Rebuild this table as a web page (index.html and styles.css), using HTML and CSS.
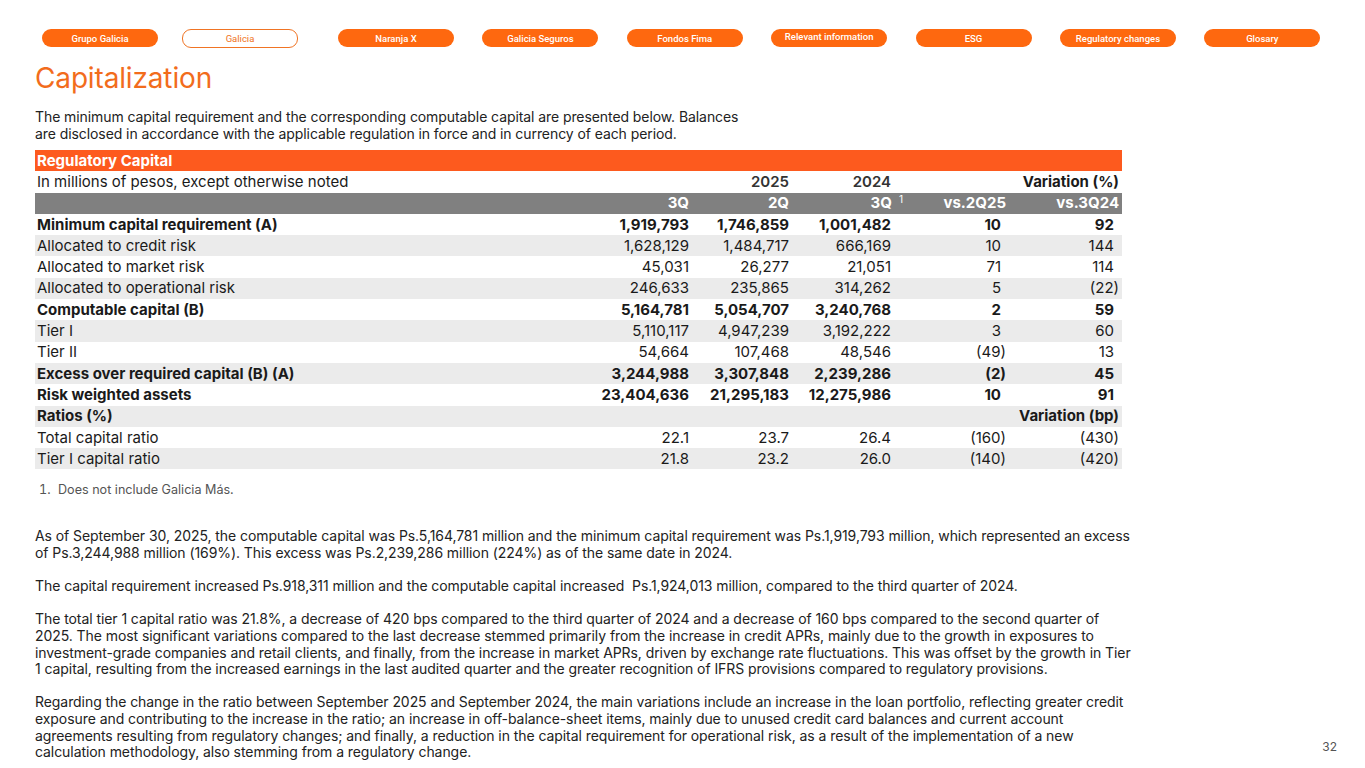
FILE: index.html
```html
<!DOCTYPE html>
<html lang="en">
<head>
<meta charset="utf-8">
<title>Capitalization</title>
<link rel="stylesheet" href="styles.css">
</head>
<body>
<div class="page">
  <nav class="nav">
    <span class="pill">Grupo Galicia</span>
    <span class="pill pill-outline">Galicia</span>
    <span class="pill">Naranja X</span>
    <span class="pill">Galicia Seguros</span>
    <span class="pill">Fondos Fima</span>
    <span class="pill pill-raised">Relevant information</span>
    <span class="pill">ESG</span>
    <span class="pill">Regulatory changes</span>
    <span class="pill">Glosary</span>
  </nav>

  <h1 class="title">Capitalization</h1>

  <p class="intro">The minimum capital requirement and the corresponding computable capital are presented below. Balances<br>are disclosed in accordance with the applicable regulation in force and in currency of each period.</p>

  <table class="cap">
    <colgroup>
      <col class="c-label"><col class="c-1"><col class="c-2"><col class="c-3"><col class="c-4"><col class="c-5">
    </colgroup>
    <tr class="r-title"><td colspan="6">Regulatory Capital</td></tr>
    <tr class="r-units">
      <td>In millions of pesos, except otherwise noted</td>
      <td></td><td class="n semi">2025</td><td class="n semi">2024</td><td></td><td class="n b">Variation (%)</td>
    </tr>
    <tr class="r-head">
      <td></td><td class="n">3Q</td><td class="n">2Q</td><td class="n">3Q<span class="sup">1</span></td><td class="n">vs.2Q25</td><td class="n">vs.3Q24</td>
    </tr>
    <tr class="b"><td>Minimum capital requirement (A)</td><td class="n">1,919,793</td><td class="n">1,746,859</td><td class="n">1,001,482</td><td class="n pr">10</td><td class="n pr">92</td></tr>
    <tr class="g"><td>Allocated to credit risk</td><td class="n">1,628,129</td><td class="n">1,484,717</td><td class="n">666,169</td><td class="n pr">10</td><td class="n pr">144</td></tr>
    <tr><td>Allocated to market risk</td><td class="n">45,031</td><td class="n">26,277</td><td class="n">21,051</td><td class="n pr">71</td><td class="n pr">114</td></tr>
    <tr class="g"><td>Allocated to operational risk</td><td class="n">246,633</td><td class="n">235,865</td><td class="n">314,262</td><td class="n pr">5</td><td class="n">(22)</td></tr>
    <tr class="b"><td>Computable capital (B)</td><td class="n">5,164,781</td><td class="n">5,054,707</td><td class="n">3,240,768</td><td class="n pr">2</td><td class="n pr">59</td></tr>
    <tr class="g"><td>Tier I</td><td class="n">5,110,117</td><td class="n">4,947,239</td><td class="n">3,192,222</td><td class="n pr">3</td><td class="n pr">60</td></tr>
    <tr><td>Tier II</td><td class="n">54,664</td><td class="n">107,468</td><td class="n">48,546</td><td class="n">(49)</td><td class="n pr">13</td></tr>
    <tr class="g b"><td>Excess over required capital (B) (A)</td><td class="n">3,244,988</td><td class="n">3,307,848</td><td class="n">2,239,286</td><td class="n">(2)</td><td class="n pr">45</td></tr>
    <tr class="b"><td>Risk weighted assets</td><td class="n">23,404,636</td><td class="n">21,295,183</td><td class="n">12,275,986</td><td class="n pr">10</td><td class="n pr">91</td></tr>
    <tr class="g b"><td>Ratios (%)</td><td></td><td></td><td></td><td></td><td class="n">Variation (bp)</td></tr>
    <tr><td>Total capital ratio</td><td class="n">22.1</td><td class="n">23.7</td><td class="n">26.4</td><td class="n">(160)</td><td class="n">(430)</td></tr>
    <tr class="g"><td>Tier I capital ratio</td><td class="n">21.8</td><td class="n">23.2</td><td class="n">26.0</td><td class="n">(140)</td><td class="n">(420)</td></tr>
  </table>

  <ol class="notes">
    <li>Does not include Galicia Más.</li>
  </ol>

  <div class="body">
    <p>As of September 30, 2025, the computable capital was Ps.5,164,781 million and the minimum capital requirement was Ps.1,919,793 million, which represented an excess of Ps.3,244,988 million (169%). This excess was Ps.2,239,286 million (224%) as of the same date in 2024.</p>
    <p>The capital requirement increased Ps.918,311 million and the computable capital increased&nbsp; Ps.1,924,013 million, compared to the third quarter of 2024.</p>
    <p>The total tier 1 capital ratio was 21.8%, a decrease of 420 bps compared to the third quarter of 2024 and a decrease of 160 bps compared to the second quarter of 2025. The most significant variations compared to the last decrease stemmed primarily from the increase in credit APRs, mainly due to the growth in exposures to investment-grade companies and retail clients, and finally, from the increase in market APRs, driven by exchange rate fluctuations. This was offset by the growth in Tier 1 capital, resulting from the increased earnings in the last audited quarter and the greater recognition of IFRS provisions compared to regulatory provisions.</p>
    <p>Regarding the change in the ratio between September 2025 and September 2024, the main variations include an increase in the loan portfolio, reflecting greater credit exposure and contributing to the increase in the ratio; an increase in off-balance-sheet items, mainly due to unused credit card balances and current account agreements resulting from regulatory changes; and finally, a reduction in the capital requirement for operational risk, as a result of the implementation of a new calculation methodology, also stemming from a regulatory change.</p>
  </div>

  <div class="pageno">32</div>
</div>
</body>
</html>
```

FILE: styles.css
```css
* { box-sizing: border-box; }
html, body { margin: 0; padding: 0; background: #fff; }
body {
  font-family: Inter, "Noto Sans", "Liberation Sans", sans-serif;
  color: #1d1d1d;
}
.page {
  position: relative;
  width: 1365px;
  height: 768px;
  padding: 28px 0 0 35px;
  overflow: hidden;
}

/* nav */
.nav {
  display: flex;
  gap: 28.4px;
  margin-left: 7px;
  height: 19px;
}
.pill {
  flex: 0 0 116px;
  height: 18px;
  border-radius: 9px;
  background: #fe680f;
  color: #fff;
  font-family: Roboto, "Liberation Sans", sans-serif;
  font-size: 9.5px;
  font-weight: 500;
  display: flex;
  align-items: center;
  justify-content: center;
  margin-top: 1px;
}
.pill-outline {
  background: #fff;
  border: 1px solid #f07424;
  color: #f07424;
  font-weight: 400;
  height: 19px;
  margin-left: -4.4px;
  margin-right: 11.6px;
}
.pill-raised { padding-bottom: 3px; }

/* title */
.title {
  margin: 14px 0 0;
  font-size: 28px;
  font-weight: 400;
  color: #f26c1c;
  line-height: 34px;
  letter-spacing: -0.15px;
}
.intro {
  margin: 13px 0 0;
  font-size: 14px;
  line-height: 17px;
  color: #222;
  letter-spacing: -0.08px;
}

/* table */
.cap {
  margin-top: 8px;
  width: 1087px;
  border-collapse: collapse;
  table-layout: fixed;
  font-size: 15px;
}
.c-label { width: 545px; }
.c-1 { width: 112px; }
.c-2 { width: 100px; }
.c-3 { width: 102px; }
.c-4 { width: 115px; }
.c-5 { width: 113px; }
.cap td {
  height: 21.3px;
  padding: 0 2px;
  line-height: 20px;
  white-space: nowrap;
  color: #1a1a1a;
}
.cap td.n { text-align: right; padding-right: 3px; }
.cap td.n.pr { padding-right: 8px; }
.cap tr.b td { font-weight: 700; }
.cap tr.g td { background: #ebebeb; }
.cap .b { font-weight: 700; }
.cap .semi { font-weight: 600; color: #333; }
.r-title td {
  background: #fd5a1e;
  color: #fff !important;
  font-weight: 700;
}
.r-head td {
  background: #808080;
  color: #fff !important;
  font-weight: 700;
}
.sup {
  display: inline-block;
  font-size: 10px;
  font-weight: 400;
  vertical-align: 5px;
  line-height: 1;
  margin-left: 7px;
  margin-right: -12px;
}

/* notes */
.notes {
  margin: 13px 0 0;
  padding-left: 19px;
  font-size: 12.6px;
  line-height: 15px;
  color: #555;
}
.notes li { padding-left: 4px; }

/* body */
.body {
  margin-top: 31px;
  width: 1100px;
  font-size: 14px;
  line-height: 16.6px;
  color: #222;
  letter-spacing: -0.07px;
}
.body p { margin: 0 0 16.6px; }

.pageno {
  position: absolute;
  right: 28px;
  bottom: 14px;
  font-size: 12px;
  color: #555;
}
```
